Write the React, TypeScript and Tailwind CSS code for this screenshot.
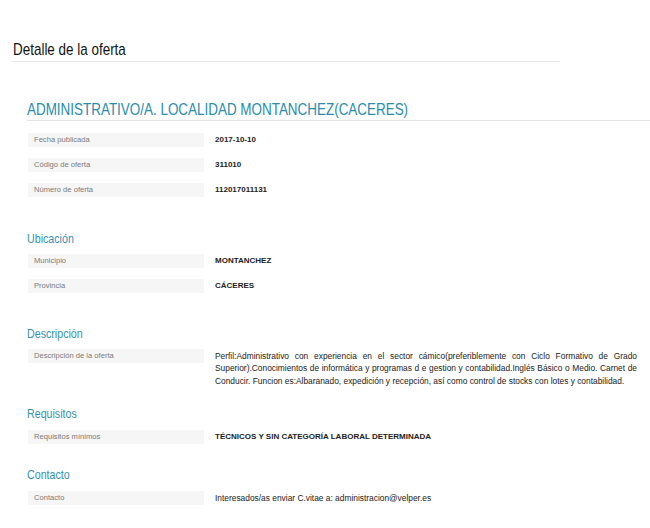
// No narrow face is installed, so the condensed headings are Arial-metric text squeezed horizontally.
const squeeze = 'inline-block origin-left scale-x-[0.82] whitespace-nowrap';

type Field = { label: string; value: string };

function Label({ children }: { children: React.ReactNode }) {
  return (
    <div className="ml-[1px] h-[14px] w-[176px] shrink-0 bg-[#f6f6f6] pl-[6px] text-[7.6px] leading-[14px] text-[#7a7a7a]">
      {children}
    </div>
  );
}

function Row({ label, value, className = '' }: Field & { className?: string }) {
  return (
    <div className={`flex items-start ${className}`}>
      <Label>{label}</Label>
      <div className="ml-[11px] text-[8px] font-bold leading-[14px] text-[#222]">{value}</div>
    </div>
  );
}

function SectionTitle({ children, className = '' }: { children: React.ReactNode; className?: string }) {
  return (
    <h3 className={`text-[13px] leading-[15px] text-[#3592b3] ${className}`}>
      <span className={squeeze}>{children}</span>
    </h3>
  );
}

export default function App() {
  const descLines = [
    'Perfil:Administrativo con experiencia en el sector cámico(preferiblemente con Ciclo Formativo de Grado',
    'Superior).Conocimientos de informática y programas d e gestion y contabilidad.Inglés Básico o Medio. Carnet de',
    'Conducir. Funcion es:Albaranado, expedición y recepción, así como control de stocks con lotes y contabilidad.',
  ];

  return (
    <div className="h-[528px] w-[650px] overflow-hidden bg-white font-['Liberation_Sans',Arial,sans-serif]">
      <div className="ml-[12px] w-[548px] border-b border-[#e8e8e8] pb-[2.5px] pl-[1px] pt-[39.5px]">
        <h1 className="text-[16.4px] leading-[19px] text-[#111]">
          <span className={squeeze}>Detalle de la oferta</span>
        </h1>
      </div>

      <div className="ml-[27px] mt-[37px] border-b border-[#e4e4e4] pb-[1px]">
        <h2 className="text-[16.4px] leading-[20px] text-[#2a8cae]">
          <span className={squeeze}>ADMINISTRATIVO/A. LOCALIDAD MONTANCHEZ(CACERES)</span>
        </h2>
      </div>

      <div className="flex flex-col pl-[27px]">
        <Row className="mt-[12px]" label="Fecha publicada" value="2017-10-10" />
        <Row className="mt-[11px]" label="Código de oferta" value="311010" />
        <Row className="mt-[11px]" label="Número de oferta" value="112017011131" />

        <SectionTitle className="mt-[33.5px]">Ubicación</SectionTitle>
        <Row className="mt-[8.5px]" label="Municipio" value="MONTANCHEZ" />
        <Row className="mt-[11px]" label="Provincia" value="CÁCERES" />

        <SectionTitle className="mt-[32.5px]">Descripción</SectionTitle>
        <div className="mt-[8.5px] flex items-start">
          <Label>Descripción de la oferta</Label>
          <div className="ml-[11px] w-[422px] pt-[0.5px] text-[8.4px] leading-[12.5px] text-[#222]">
            {descLines.map((line, i) => (
              <div
                key={i}
                className={i < descLines.length - 1 ? 'text-justify [text-align-last:justify]' : ''}
              >
                {line}
              </div>
            ))}
          </div>
        </div>

        <SectionTitle className="mt-[19px]">Requisitos</SectionTitle>
        <Row className="mt-[8.5px]" label="Requisitos mínimos" value="TÉCNICOS Y SIN CATEGORÍA LABORAL DETERMINADA" />

        <SectionTitle className="mt-[23.5px]">Contacto</SectionTitle>
        <div className="mt-[8.5px] flex items-start">
          <Label>Contacto</Label>
          <div className="ml-[11px] text-[8.4px] leading-[14px] text-[#222]">
            Interesados/as enviar C.vitae a: administracion@velper.es
          </div>
        </div>
      </div>
    </div>
  );
}
